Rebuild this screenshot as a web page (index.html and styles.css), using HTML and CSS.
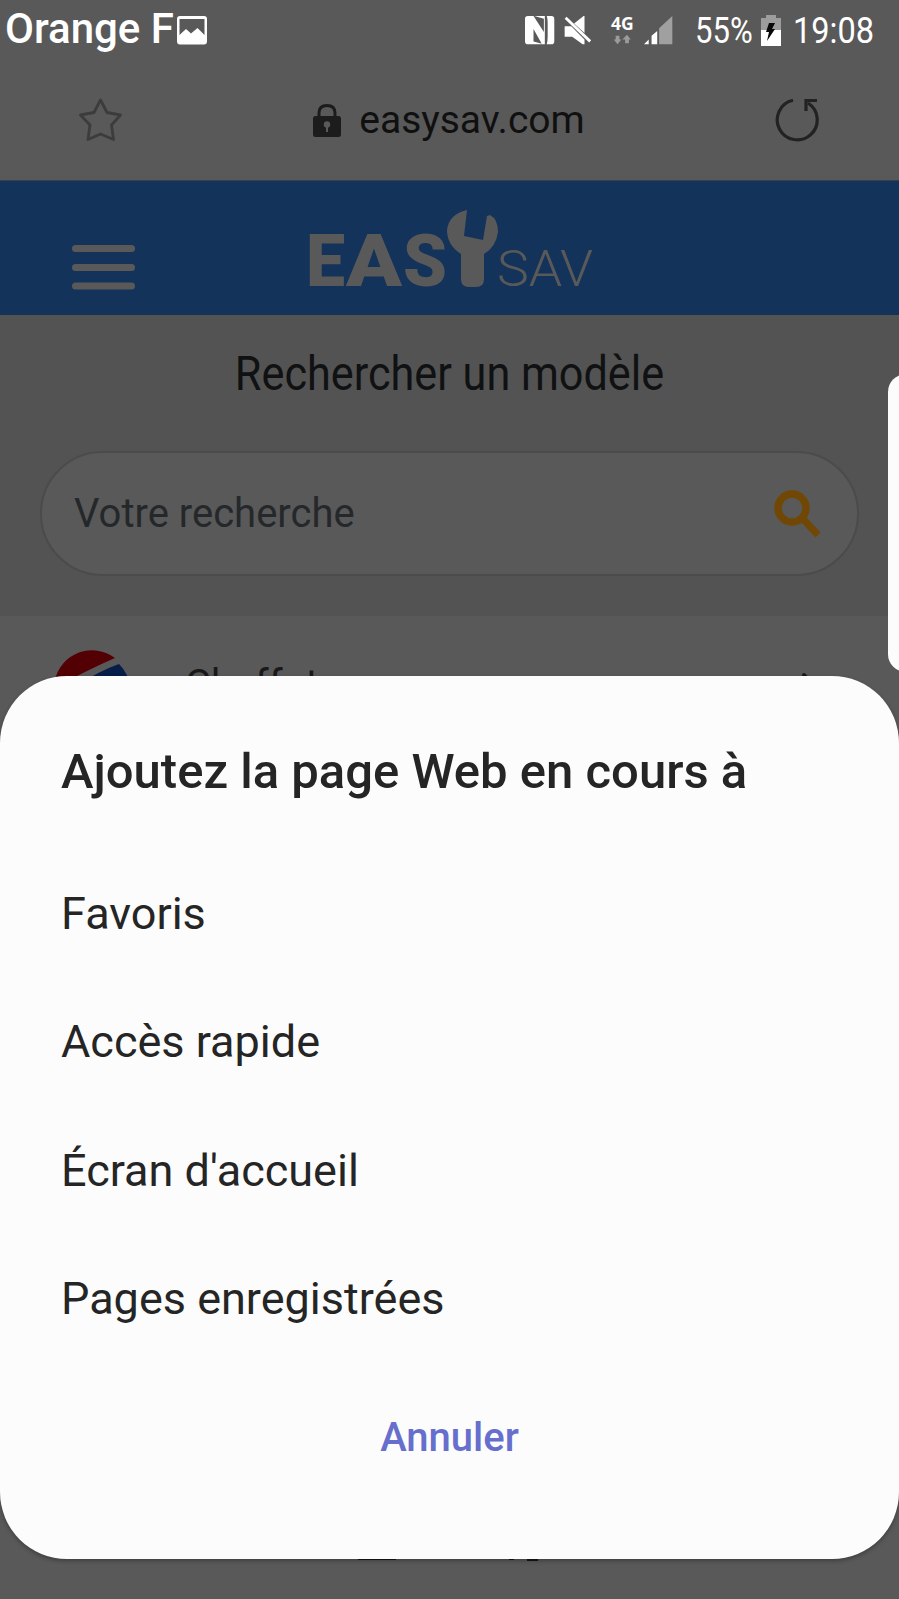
FILE: index.html
```html
<!DOCTYPE html>
<html lang="fr">
<head>
<meta charset="utf-8">
<title>easysav.com</title>
<link rel="stylesheet" href="styles.css">
</head>
<body>
<div class="phone">
  <header class="status">
    <span class="carrier">Orange F</span>
    <svg class="picture" width="30" height="29" viewBox="0 0 30 29"><path fill="#fff" fill-rule="evenodd" d="M3 0H27Q30 0 30 3V25Q30 28.500 27 28.500H3Q0 28.500 0 25V3Q0 0 3 0ZM2.500 3V19L9 13L14 17.500L20.500 12L27.500 19V3Z"/></svg>
    <svg class="indicators" width="180" height="34" viewBox="0 0 180 34">
      <path fill="#fff" d="M3 1H9L20 18V4L10 1H21V31H18L9 15V28L20 31H3Q0 31 0 28V4Q0 1 3 1Z"/>
      <path fill="#fff" d="M23 1H28Q31 1 31 4V28Q31 31 28 31H23Q24 28 24 23V8Q24 4 23 1Z"/>
      <path fill="#fff" d="M42 12H49L54 17L63 26V31H61L50 23H42ZM52 9L62 1H63V19Z"/>
      <path stroke="#fff" stroke-width="3" d="M43 3L69 28"/>
      <text class="network" x="91" y="16" textLength="24" lengthAdjust="spacingAndGlyphs">4G</text>
      <path fill="#9b9b9b" d="M96 22H100V26H102L98 31L94 26H96ZM106 30H110V26H112L108 21L103 26H106Z"/>
      <path fill="#fff" d="M126 31L131 26V31ZM134 22L140 17V31H134Z"/>
      <path fill="#a0a0a0" d="M142 14L156 1V31H142Z"/>
    </svg>
    <span class="percent"><span>55%</span></span>
    <svg class="battery" width="20" height="31" viewBox="0 0 20 31"><path fill="#9c9c9c" d="M5 0H15V3H20V16H0V3H5Z"/><path fill="#fff" d="M0 15H20V31H0Z"/><path fill="#080808" d="M8 8H14L11 14H14L6 26L8 17H5Z"/></svg>
    <span class="time"><span>19:08</span></span>
  </header>

  <nav class="address">
    <svg width="44" height="45" viewBox="0 0 44 45"><path fill="none" stroke="#3c3c3c" stroke-width="2.800" stroke-linejoin="round" d="M21.500 2L28 14.500L41.500 17L32.500 27L34.500 41.500L21.500 36L9 41.500L11 27L1.500 17L15 14.500Z"/></svg>
    <div class="site">
      <svg width="28" height="33" viewBox="0 0 28 33"><path fill="none" stroke="#1c1c1c" stroke-width="3" d="M6 14V9Q6 1.500 14 1.500T22 9V14"/><rect y="12" width="28" height="21" rx="2.500" fill="#1c1c1c"/><circle cx="14" cy="20.500" r="3.200" fill="#595959"/><path fill="#595959" d="M13 22H15V28H13Z"/></svg>
      <span>easysav.com</span>
    </div>
    <svg width="46" height="46" viewBox="0 0 46 46"><path fill="none" stroke="#222" stroke-width="3.200" d="M18 3.300A20 20 0 1 0 33 6"/><path fill="none" stroke="#222" stroke-width="3.200" d="M31 14V3.500H42"/></svg>
  </nav>

  <section class="brand">
    <svg class="menu" width="63" height="45" viewBox="0 0 63 45"><g fill="#595959"><rect width="63" height="7" rx="3.500"/><rect y="19" width="63" height="7" rx="3.500"/><rect y="37.500" width="63" height="7" rx="3.500"/></g></svg>
    <svg class="logo" width="284" height="80" viewBox="0 0 284 80">
      <g fill="#595959">
        <g class="heavy"><text x="-3" y="77" textLength="39" lengthAdjust="spacingAndGlyphs">E</text><text x="37" y="77" textLength="56" lengthAdjust="spacingAndGlyphs">A</text><text x="94" y="77" textLength="44" lengthAdjust="spacingAndGlyphs">S</text></g>
        <path d="M158 1Q140 5 138 21Q138 36 152 45V70Q152 78 160 78H167Q175 78 175 70V45Q187 38 189 23Q189 10 181 6L178 7L174 31L155 27Z"/>
        <text class="light" x="188" y="77" textLength="96" lengthAdjust="spacingAndGlyphs">SAV</text>
      </g>
    </svg>
  </section>

  <section class="search">
    <h1><span>Rechercher un modèle</span></h1>
    <div class="field">
      <span>Votre recherche</span>
      <svg width="48" height="48" viewBox="0 0 48 48"><circle cx="18" cy="18" r="14" fill="none" stroke="#714705" stroke-width="7.500"/><path stroke="#714705" stroke-width="7" d="M28 28L44 45"/></svg>
    </div>
  </section>

  <section class="result">
    <svg width="76" height="76" viewBox="0 0 76 76"><path fill="#520003" d="M0 38A38 38 0 0 1 61 9Q47 15 33 22Q15 31 2 38Z"/><path fill="#051d47" d="M65 15A38 38 0 0 1 76 38H20Q45 22 65 15Z"/></svg>
    <span>Chaffoteaux</span>
    <svg class="arrow" width="22" height="34" viewBox="0 0 22 34"><path fill="none" stroke="#191919" stroke-width="4" stroke-linecap="round" d="M5 3L18 17L5 31"/></svg>
  </section>

  <svg class="toolbar" width="200" height="4" viewBox="0 0 200 4"><path fill="#161616" d="M0 0H38V2H0ZM151 0H156V2H151ZM169 0H180V3H169Z"/></svg>
  <div class="edge"></div>

  <main class="sheet">
    <h2>Ajoutez la page Web en cours à</h2>
    <ul>
      <li>Favoris</li>
      <li>Accès rapide</li>
      <li>Écran d'accueil</li>
      <li>Pages enregistrées</li>
    </ul>
    <button>Annuler</button>
  </main>
</div>
</body>
</html>
```
FILE: styles.css
```css
* { box-sizing: border-box; }
body { margin: 0; font-family: Roboto, sans-serif; background: #595959; }
svg { display: block; flex: none; }
h1, h2, ul { margin: 0; padding: 0; font-weight: 400; }
.phone { position: relative; width: 899px; height: 1599px; overflow: hidden; background: #595959; }
.status { display: flex; height: 62px; padding: 0 14px 0 5px; color: #fff; white-space: nowrap; }
.carrier { width: 185px; font-size: 42px; line-height: 57px; font-weight: 500; }
.picture { margin-top: 16px; }
.indicators { margin: 14px 0 0 318px; width: 170px; }
.network { font: 700 18px "Open Sans", sans-serif; fill: #fff; }
.percent, .time { font-size: 37px; line-height: 62px; }
.percent { width: 66px; }
.percent span, .time span { display: inline-block; transform-origin: left; transform: scaleX(.84); }
.battery { margin-top: 15px; }
.time { margin-left: 12px; }
.time span { transform: scaleX(.88); }
.address { display: flex; justify-content: space-between; align-items: center; height: 118px; padding: 0 78px 2px 79px; }
.site { display: flex; align-items: center; gap: 18px; font-size: 39px; color: #101010; }
.brand { display: flex; height: 135px; background: #14335a; border-top: 1px solid #35414f; }
.menu { margin: 64px 0 0 72px; }
.logo { margin: 28px 0 0 174px; overflow: visible; }
.heavy { font: 900 72px Roboto, sans-serif; }
.light { font: 300 50px Roboto, sans-serif; }
.search { height: 301px; padding: 28px 40px 0; background: #535353; }
.search h1 { height: 108px; display: flex; justify-content: center; font-size: 48px; line-height: 62px; color: #101112; white-space: nowrap; }
.search h1 span { transform: scaleX(.9); }
.field { display: flex; justify-content: space-between; align-items: center; height: 125px; padding: 0 35px 0 32px; border: 2px solid #4b4b4b; border-radius: 63px; background: #595959; font-size: 40px; color: #25282b; }
.result { display: flex; padding: 33px 78px 0 54px; font-size: 40px; color: #191919; }
.result span { margin-left: 55px; line-height: 72px; }
.arrow { margin: 23px 0 0 auto; }
.toolbar { position: absolute; left: 358px; top: 1558px; }
.edge { position: absolute; left: 888px; top: 374px; width: 40px; height: 298px; border-radius: 18px; background: #fcfcfc; }
.sheet { position: absolute; left: 0; top: 676px; width: 899px; height: 883px; padding: 60px 61px 0; border-radius: 67px; background: #fcfcfc; color: #252525; box-shadow: 0 2px 4px rgba(0,0,0,.3); }
.sheet h2 { font-size: 49px; line-height: 72px; font-weight: 500; white-space: nowrap; }
.sheet ul { list-style: none; margin-top: 42px; }
.sheet li { height: 128.300px; line-height: 128px; font-size: 45px; }
.sheet button { display: block; margin: 0 auto; padding: 0; border: 0; background: none; font: 500 40px/150px Roboto, sans-serif; color: #666fcd; }
```
